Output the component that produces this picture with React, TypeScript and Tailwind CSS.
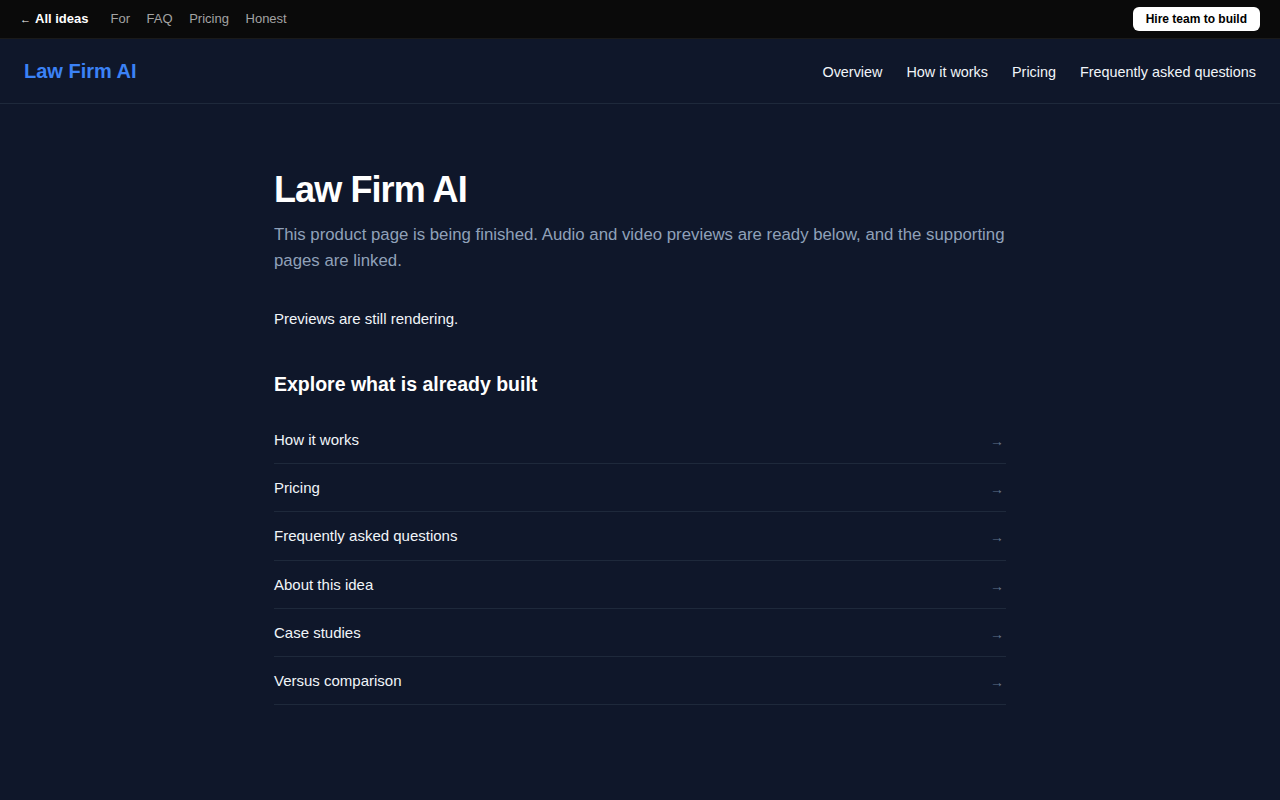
export default function App() {
  const links = [
    "How it works",
    "Pricing",
    "Frequently asked questions",
    "About this idea",
    "Case studies",
    "Versus comparison",
  ];

  return (
    <div className="min-h-screen bg-[#0f172a] text-slate-100 font-['Liberation_Sans',Arial,sans-serif]">
      {/* top strip */}
      <div className="flex h-[39px] items-center justify-between bg-[#0a0a0a] px-5 border-b border-[#1a1a1a]">
        <div className="flex items-center text-[13px]">
          <a href="#" className="font-bold text-white">
            <span className="text-[11px] mr-1">←</span>All ideas
          </a>
          <nav className="ml-[22px] flex gap-[16.6px] text-[#a3a3a3]">
            <a href="#">For</a>
            <a href="#">FAQ</a>
            <a href="#">Pricing</a>
            <a href="#">Honest</a>
          </nav>
        </div>
        <button className="rounded-md bg-white px-[13px] py-1 text-[12px] leading-4 font-bold text-black">
          Hire team to build
        </button>
      </div>

      {/* product header */}
      <header className="flex h-[65px] items-center justify-between border-b border-[#1e293b] px-6">
        <a href="#" className="text-[20px] font-bold text-[#3b82f6]">
          Law Firm AI
        </a>
        <nav className="flex gap-6 pt-1 text-[0.9rem] text-slate-100">
          <a href="#">Overview</a>
          <a href="#">How it works</a>
          <a href="#">Pricing</a>
          <a href="#">Frequently asked questions</a>
        </nav>
      </header>

      <main className="mx-auto max-w-[732px] pt-[64px] pb-20">
        <h1 className="text-[36px] font-bold leading-[44px] tracking-tight text-white">Law Firm AI</h1>
        <p className="mt-[10px] text-[1.05rem] leading-[26px] text-slate-400">
          This product page is being finished. Audio and video previews are ready below, and the supporting
          pages are linked.
        </p>

        <p className="mt-[34px] text-[15px] text-slate-100">Previews are still rendering.</p>

        <h2 className="mt-[39px] text-[19.5px] font-bold text-white">Explore what is already built</h2>

        <ul className="mt-[17px]">
          {links.map((l) => (
            <li key={l} className="border-b border-[#1e293b]">
              <a href="#" className="flex items-center justify-between py-3 text-[15px] leading-[23.25px] text-slate-100">
                <span>{l}</span>
                <span className="relative top-0.5 text-[14px] text-slate-500 pr-0.5">→</span>
              </a>
            </li>
          ))}
        </ul>
      </main>
    </div>
  );
}
